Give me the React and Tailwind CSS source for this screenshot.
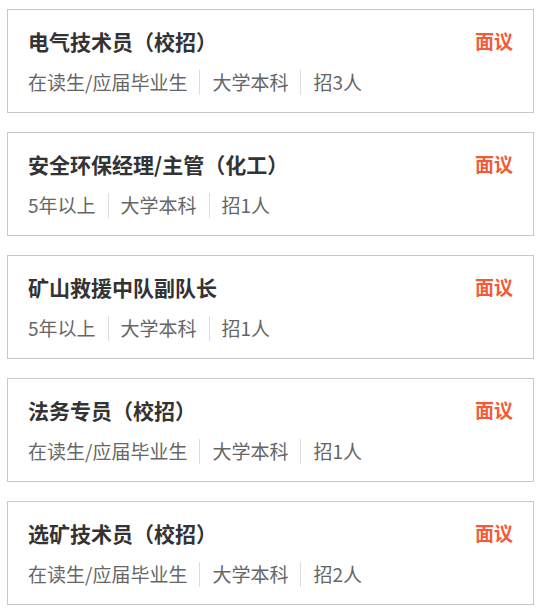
const jobs = [
  { title: '电气技术员（校招）', tags: ['在读生/应届毕业生', '大学本科', '招3人'] },
  { title: '安全环保经理/主管（化工）', tags: ['5年以上', '大学本科', '招1人'] },
  { title: '矿山救援中队副队长', tags: ['5年以上', '大学本科', '招1人'] },
  { title: '法务专员（校招）', tags: ['在读生/应届毕业生', '大学本科', '招1人'] },
  { title: '选矿技术员（校招）', tags: ['在读生/应届毕业生', '大学本科', '招2人'] },
];

export default function App() {
  return (
    <div
      className="bg-white min-h-screen pt-[9px] px-[7px] flex flex-col gap-[19px] w-[541px]"
      style={{ fontFamily: '"Noto Sans CJK SC", "Noto Sans", sans-serif' }}
    >
      {jobs.map((job, i) => (
        <div key={i} className="border border-[#c8c8c8] px-5 pt-[17px] pb-[16px]">
          <div className="flex items-center justify-between h-[28px]">
            <h3 className="text-[21px] leading-[28px] font-bold text-[#333]">{job.title}</h3>
            <span className="text-[19px] leading-[28px] font-bold text-[#f45a35]">面议</span>
          </div>
          <div className="flex items-center mt-[13px] h-[28px] text-[19px] leading-[28px] text-[#666]">
            {job.tags.map((t, j) => (
              <span key={j} className="flex items-center">
                {j > 0 && <span className="w-px h-[25px] bg-[#ddd] mx-3" />}
                {t}
              </span>
            ))}
          </div>
        </div>
      ))}
    </div>
  );
}
